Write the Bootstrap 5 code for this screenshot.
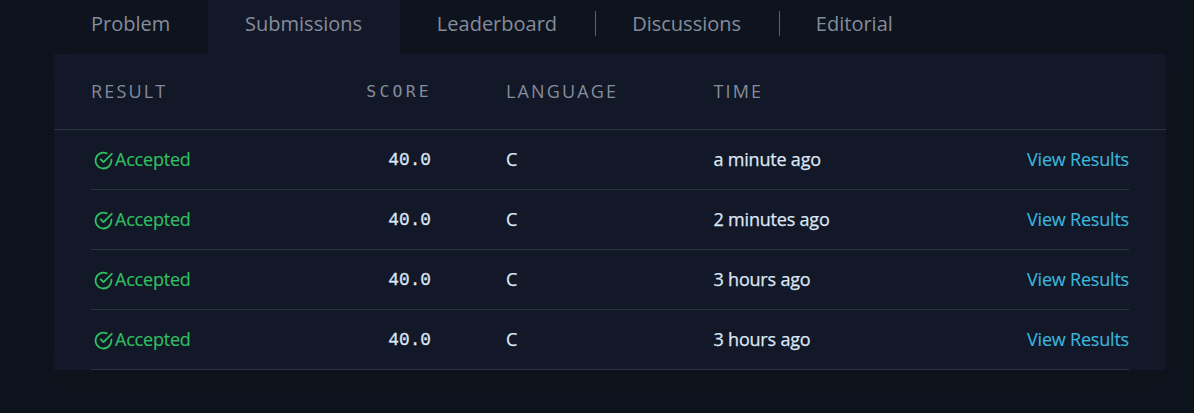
<!DOCTYPE html>
<html lang="en">
<head>
<meta charset="utf-8">
<meta name="viewport" content="width=device-width, initial-scale=1">
<title>Submissions</title>
<link href="https://cdn.jsdelivr.net/npm/bootstrap@5.3.0/dist/css/bootstrap.min.css" rel="stylesheet">
<style>
  body { background: #0d141d; color: #dde6f5; font-family: "Open Sans", "Noto Sans", sans-serif; font-size: 18px; height: 413px; overflow: hidden; }
  .board { width: 1112px; margin-left: 54px; }
  .tabs { height: 54px; }
  .tabs .nav-link { color: #858c9c; font-size: 20px; line-height: 30px; padding: 9px 37.8px 15px 37px; border-radius: 0; position: relative; z-index: 1; white-space: nowrap; }
  .tabs .nav-link:nth-last-child(3) { padding-left: 36.3px; }
  .tabs .nav-link:last-child { padding-left: 36px; }
  .tabs .nav-link.active { background: #121827; color: #858c9c; }
  .divider { width: 1px; height: 25px; margin-top: 11px; background: #5c616b; }
  .panel { background: #121827; box-shadow: 0 6px 20px #110f1780; }
  .cols { display: grid; grid-template-columns: 200px 140px 75px 207.5px 1fr auto; }
  .head-row { height: 76px; padding: 0 37px; border-bottom: 1px solid #2c3341; color: #858c9c; letter-spacing: 2.15px; }
  .entry { height: 60px; margin: 0 37px; border-bottom: 1px solid #2c3341; letter-spacing: -.2px; font-weight: 500; -webkit-text-stroke: .25px currentColor; }
  .mono { font-family: "Liberation Mono", monospace; font-size: 17.8px; letter-spacing: 0; padding-top: 2px; -webkit-text-stroke-width: .3px; }
  .head-row .mono { font-family: "DejaVu Sans Mono", monospace; font-size: 16.5px; line-height: 27px; letter-spacing: 3.2px; margin-right: -1px; padding: 0; -webkit-text-stroke-width: 0; }
  .ok { color: #2fbf60; font-weight: 400; -webkit-text-stroke-width: .15px; }
  .ok svg { margin: 2px 2px 0 3px; }
  .view { color: #3cb4dc; font-weight: 400; -webkit-text-stroke-width: .15px; }
</style>
</head>
<body>
<main class="board">
  <nav class="nav tabs flex-nowrap">
    <a class="nav-link" href="#">Problem</a>
    <a class="nav-link active" href="#">Submissions</a>
    <a class="nav-link" href="#">Leaderboard</a>
    <span class="divider"></span>
    <a class="nav-link" href="#">Discussions</a>
    <span class="divider"></span>
    <a class="nav-link" href="#">Editorial</a>
  </nav>
  <section class="panel">
    <div class="cols head-row align-items-center">
      <span>RESULT</span><span class="mono text-end">SCORE</span><span></span><span>LANGUAGE</span><span>TIME</span><span></span>
    </div>
    <div class="cols entry align-items-center">
      <span class="ok d-flex align-items-center"><svg width="19" height="19" viewBox="0 0 24 24" fill="none" stroke="currentColor" stroke-width="2.3" stroke-linecap="round" stroke-linejoin="round"><path d="M22 11v1a10 10 0 1 1-6-9.1M22.5 3.5 12 14l-3.5-3.5"/></svg>Accepted</span>
      <span class="mono text-end">40.0</span><span></span><span>C</span><span>a minute ago</span><a class="view text-decoration-none" href="#">View Results</a>
    </div>
    <div class="cols entry align-items-center">
      <span class="ok d-flex align-items-center"><svg width="19" height="19" viewBox="0 0 24 24" fill="none" stroke="currentColor" stroke-width="2.3" stroke-linecap="round" stroke-linejoin="round"><path d="M22 11v1a10 10 0 1 1-6-9.1M22.5 3.5 12 14l-3.5-3.5"/></svg>Accepted</span>
      <span class="mono text-end">40.0</span><span></span><span>C</span><span>2 minutes ago</span><a class="view text-decoration-none" href="#">View Results</a>
    </div>
    <div class="cols entry align-items-center">
      <span class="ok d-flex align-items-center"><svg width="19" height="19" viewBox="0 0 24 24" fill="none" stroke="currentColor" stroke-width="2.3" stroke-linecap="round" stroke-linejoin="round"><path d="M22 11v1a10 10 0 1 1-6-9.1M22.5 3.5 12 14l-3.5-3.5"/></svg>Accepted</span>
      <span class="mono text-end">40.0</span><span></span><span>C</span><span>3 hours ago</span><a class="view text-decoration-none" href="#">View Results</a>
    </div>
    <div class="cols entry align-items-center">
      <span class="ok d-flex align-items-center"><svg width="19" height="19" viewBox="0 0 24 24" fill="none" stroke="currentColor" stroke-width="2.3" stroke-linecap="round" stroke-linejoin="round"><path d="M22 11v1a10 10 0 1 1-6-9.1M22.5 3.5 12 14l-3.5-3.5"/></svg>Accepted</span>
      <span class="mono text-end">40.0</span><span></span><span>C</span><span>3 hours ago</span><a class="view text-decoration-none" href="#">View Results</a>
    </div>
  </section>
</main>
<script src="https://cdn.jsdelivr.net/npm/bootstrap@5.3.0/dist/js/bootstrap.bundle.min.js"></script>
</body>
</html>
